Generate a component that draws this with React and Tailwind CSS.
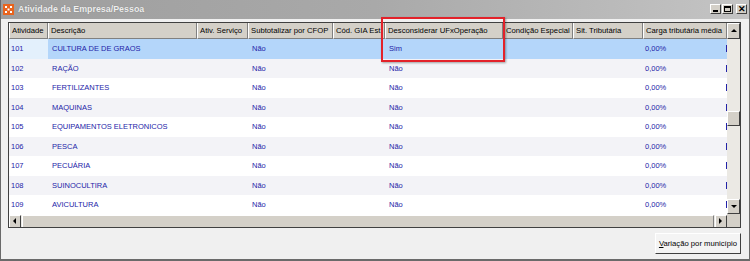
import React from "react";

const columns = [
  { label: "Atividade", w: 39 },
  { label: "Descrição", w: 149 },
  { label: "Ativ. Serviço", w: 51 },
  { label: "Subtotalizar por CFOP", w: 85 },
  { label: "Cód. GIA Est.", w: 52 },
  { label: "Desconsiderar UFxOperação", w: 118 },
  { label: "Condição Especial", w: 70 },
  { label: "Sit. Tributária", w: 70 },
  { label: "Carga tributária média", w: 84 },
];

const rows = [
  ["101", "CULTURA DE DE GRAOS", "Sim"],
  ["102", "RAÇÃO", "Não"],
  ["103", "FERTILIZANTES", "Não"],
  ["104", "MAQUINAS", "Não"],
  ["105", "EQUIPAMENTOS ELETRONICOS", "Não"],
  ["106", "PESCA", "Não"],
  ["107", "PECUÁRIA", "Não"],
  ["108", "SUINOCULTIRA", "Não"],
  ["109", "AVICULTURA", "Não"],
];

function Bevel({ className = "", children }) {
  return (
    <div
      className={`border border-t-white border-l-white border-r-[#404040] border-b-[#404040] bg-[#d4d0c8] flex items-center justify-center ${className}`}
    >
      {children}
    </div>
  );
}

function Arrow({ dir }) {
  const pts = {
    up: "1,5 7,5 4,2",
    down: "1,2 7,2 4,5",
    left: "5,1 5,7 2,4",
    right: "2,1 2,7 5,4",
  }[dir];
  return (
    <svg width="8" height="8" viewBox="0 0 8 8">
      <polygon points={pts} fill="#000" />
    </svg>
  );
}

function WinButton({ children }) {
  return (
    <div className="w-[11px] h-[10px] bg-[#d4d0c8] border border-t-white border-l-white border-r-[#404040] border-b-[#404040] flex items-center justify-center">
      {children}
    </div>
  );
}

export default function App() {
  return (
    <div
      className="w-[750px] h-[261px] flex flex-col bg-[#f0f0f0] border-x-[1px] border-b-[2px] border-[#6a6a6a] overflow-hidden relative"
      style={{ fontFamily: '"Liberation Sans", Arial, sans-serif' }}
    >
      {/* title bar */}
      <div className="h-[19px] shrink-0 flex items-center bg-gradient-to-r from-[#9e9e9e] via-[#a9a9a9] to-[#c4c4c4] pl-[2px] pr-[2px]">
        <svg width="11" height="11" viewBox="0 0 11 11" className="mr-[4px]">
          <rect width="11" height="11" fill="#e8641e" />
          <path d="M2 2h2v2H2zM7 2h2v2H7zM4.5 4.5h2v2h-2zM2 7h2v2H2zM7 7h2v2H7z" fill="#fff" />
        </svg>
        <span className="text-[8.9px] font-bold text-[#eeeeee] [text-shadow:0_0_1px_#777]">
          Atividade da Empresa/Pessoa
        </span>
        <div className="ml-auto flex items-center gap-[1px] mt-[-1px]">
          <WinButton>
            <div className="w-[5px] h-[2px] bg-black mt-[4px]" />
          </WinButton>
          <WinButton>
            <div className="w-[7px] h-[6px] border border-black border-t-2" />
          </WinButton>
          <div className="ml-[2px]">
            <WinButton>
              <span className="text-[9px] font-bold leading-none">✕</span>
            </WinButton>
          </div>
        </div>
      </div>

      {/* grid */}
      <div className="mt-[3px] ml-[7px] w-[733px] h-[206px] border border-t-[#404040] border-l-[#404040] border-r-[#404040] border-b-[#404040] flex bg-white">
        <div className="w-[718px] flex flex-col overflow-hidden">
          <div className="flex h-[16px] shrink-0">
            {columns.map((c) => (
              <div
                key={c.label}
                style={{ width: c.w }}
                className="shrink-0 h-full bg-[#d4d0c8] border-l border-l-white border-r border-r-[#808080] border-b border-b-[#808080] flex items-center pl-[2px] text-[7.7px] text-black whitespace-nowrap overflow-hidden"
              >
                {c.label}
              </div>
            ))}
          </div>
          <div className="flex-1 flex flex-col">
            {rows.map((r, i) => {
              const sel = i === 0;
              const bg = sel ? "bg-[#b4d6fa]" : i % 2 === 1 ? "bg-[#f3f3f7]" : "bg-white";
              return (
                <div
                  key={r[0]}
                  className={`flex h-[19.5px] shrink-0 items-center text-[7.5px] text-[#2323a8] whitespace-nowrap ${bg}`}
                >
                  <div className={`w-[39px] h-full flex items-center pl-[2px] ${sel ? "bg-[#e3f0fc]" : ""}`}>
                    {r[0]}
                  </div>
                  <div className="w-[149px] pl-[4px]">{r[1]}</div>
                  <div className="w-[51px]" />
                  <div className="w-[85px] pl-[4px]">Não</div>
                  <div className="w-[52px]" />
                  <div className="w-[118px] pl-[4px]">{r[2]}</div>
                  <div className="w-[70px]" />
                  <div className="w-[70px]" />
                  <div className="w-[83px] pl-[2px]">0,00%</div>
                  <div className="w-[1px] h-[7px] bg-[#2323a8]" />
                </div>
              );
            })}
          </div>
          {/* horizontal scrollbar */}
          <div className="h-[13px] shrink-0 flex bg-[#ebe9e4]">
            <Bevel className="w-[12px] h-full">
              <Arrow dir="left" />
            </Bevel>
            <div className="flex-1 h-full border border-t-white border-l-white border-r-[#808080] border-b-[#808080] bg-[#d4d0c8] mx-[1px]" />
            <Bevel className="w-[12px] h-full">
              <Arrow dir="right" />
            </Bevel>
          </div>
        </div>
        {/* vertical scrollbar */}
        <div className="w-[13px] flex flex-col bg-[#ebe9e4]">
          <Bevel className="h-[16px] w-full">
            <Arrow dir="up" />
          </Bevel>
          <div className="h-[72px]" />
          <Bevel className="h-[15px] w-full" />
          <div className="flex-1" />
          <Bevel className="h-[15px] w-full">
            <Arrow dir="down" />
          </Bevel>
          <div className="h-[13px] bg-[#d4d0c8]" />
        </div>
      </div>

      {/* footer */}
      <div className="flex justify-end pr-[8px] pt-[5px]">
        <button className="h-[21px] px-[3px] bg-[#f4f4f4] border border-t-white border-l-white border-r-[#404040] border-b-[#404040] text-[7.7px] text-black">
          <span className="underline">V</span>ariação por município
        </button>
      </div>

      {/* highlight annotation */}
      <div className="absolute left-[380px] top-[17px] w-[124px] h-[45px] border-2 border-[#e3222a] shadow-[1px_1px_2px_rgba(0,0,0,0.35)] pointer-events-none" />
    </div>
  );
}
